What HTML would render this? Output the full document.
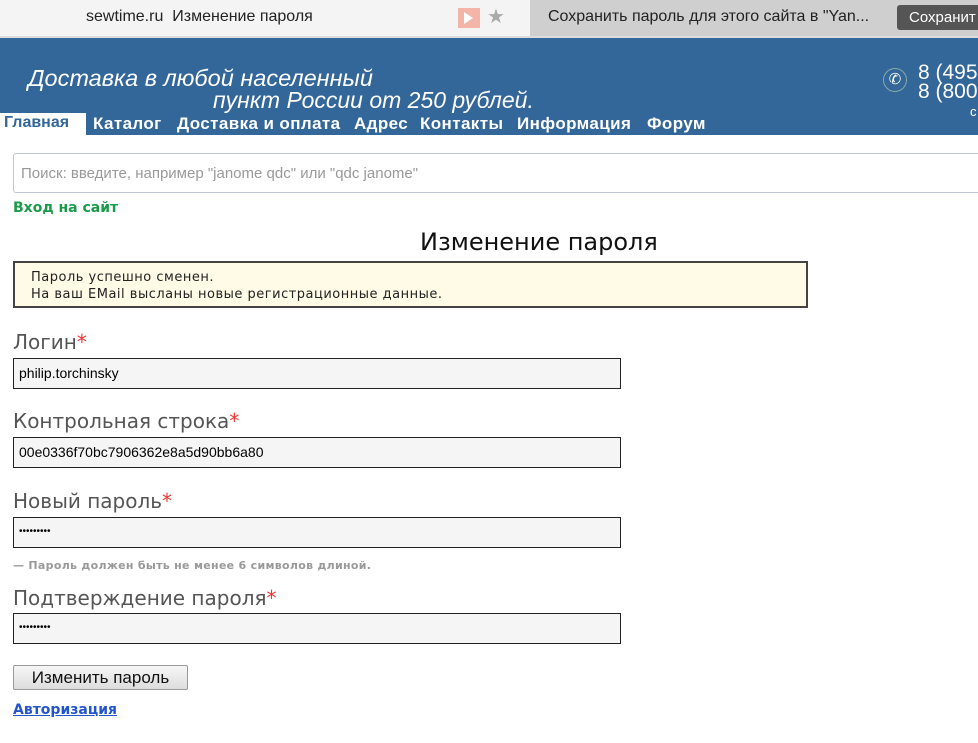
<!DOCTYPE html>
<html><head><meta charset="utf-8"><style>
body{margin:0;width:978px;height:743px;overflow:hidden;background:#fff;font-family:"Liberation Sans","DejaVu Sans",sans-serif;position:relative}
.a{position:absolute;white-space:nowrap}
.lbl{font-family:"DejaVu Sans",sans-serif;font-size:20px;color:#555}
.lbl b{color:#e33;font-weight:normal}
.inp{position:absolute;left:13px;border:1px solid #222;background:#f5f5f5;font-size:14px;line-height:28px;padding-left:5px;box-sizing:border-box;width:608px;height:31px}
.nav{position:absolute;top:114px;font-size:17px;letter-spacing:0.4px;font-weight:bold;color:#fff;white-space:nowrap}
</style></head><body>
<div class="a" style="left:0;top:0;width:978px;height:38px;background:#f4f4f4"></div>
<div class="a" style="left:530px;top:0;width:448px;height:36px;background:#cfcfcf"></div>
<div class="a" style="left:0;top:36px;width:978px;height:2px;background:#ddd"></div>
<div class="a" style="left:86px;top:8px;font-size:16px;color:#222">sewtime.ru&nbsp; Изменение пароля</div>
<div class="a" style="left:458px;top:8px;width:22px;height:20px;background:#f3b5a8"></div>
<div class="a" style="left:464px;top:12px;width:0;height:0;border-left:9px solid #fff;border-top:6px solid transparent;border-bottom:6px solid transparent"></div>
<div class="a" style="left:487px;top:4px;font-size:20px;color:#aaa">★</div>
<div class="a" style="left:548px;top:8px;font-size:16px;color:#222">Сохранить пароль для этого сайта в "Yan...</div>
<div class="a" style="left:897px;top:5px;width:81px;height:25px;background:#555;border-radius:3px 0 0 3px;color:#fff;font-size:15px;line-height:25px;padding-left:12px;box-sizing:border-box">Сохранит</div>
<div class="a" style="left:0;top:38px;width:978px;height:97px;background:#336699"></div>
<div class="a" style="left:28px;top:65px;font-size:23.5px;font-style:italic;color:#fff">Доставка в любой населенный</div>
<div class="a" style="left:213px;top:87px;font-size:23px;font-style:italic;color:#fff">пункт России от 250 рублей.</div>
<div class="a" style="left:883px;top:68px;width:22px;height:22px;border:1px solid #8aa;border-radius:50%;color:#fff;font-size:15px;text-align:center;line-height:22px">✆</div>
<div class="a" style="left:918px;top:63px;font-size:21px;color:#fff;line-height:19px">8 (495<br>8 (800</div>
<div class="a" style="left:970px;top:104px;font-size:13px;color:#fff">с</div>
<div class="a" style="left:0;top:113px;width:86px;height:22px;background:#fff"></div>
<div class="nav" style="left:4px;color:#336699;font-size:16px;letter-spacing:0">Главная</div>
<div class="nav" style="left:93px">Каталог</div>
<div class="nav" style="left:177px">Доставка и оплата</div>
<div class="nav" style="left:354px">Адрес</div>
<div class="nav" style="left:420px">Контакты</div>
<div class="nav" style="left:517px">Информация</div>
<div class="nav" style="left:647px">Форум</div>
<div class="a" style="left:13px;top:153px;width:980px;height:40px;border:1px solid #bcc7d2;border-radius:3px;box-sizing:border-box"></div>
<div class="a" style="left:21px;top:165px;font-size:15px;color:#999">Поиск: введите, например "janome qdc" или "qdc janome"</div>
<div class="a" style="left:13px;top:200px;font-size:14px;font-weight:bold;color:#1a9a4a;font-family:'DejaVu Sans',sans-serif">Вход на сайт</div>
<div class="a" style="left:420px;top:228px;font-size:24px;color:#111;font-family:'DejaVu Sans',sans-serif">Изменение пароля</div>
<div class="a" style="left:13px;top:261px;width:795px;height:47px;border:2px solid #444;background:#fffbe6;box-sizing:border-box;font-family:'DejaVu Sans',sans-serif;font-size:13px;color:#222;padding:6px 0 0 16px;line-height:17px;letter-spacing:0.5px">Пароль успешно сменен.<br>На ваш EMail высланы новые регистрационные данные.</div>
<div class="a lbl" style="left:13px;top:330px">Логин<b>*</b></div>
<div class="inp" style="top:358px">philip.torchinsky</div>
<div class="a lbl" style="left:13px;top:409px">Контрольная строка<b>*</b></div>
<div class="inp" style="top:437px">00e0336f70bc7906362e8a5d90bb6a80</div>
<div class="a lbl" style="left:13px;top:489px">Новый пароль<b>*</b></div>
<div class="inp" style="top:517px;font-size:10px">•••••••••</div>
<div class="a" style="left:13px;top:559px;font-size:11px;font-weight:bold;color:#999;font-family:'DejaVu Sans',sans-serif;letter-spacing:0.3px">— Пароль должен быть не менее 6 символов длиной.</div>
<div class="a lbl" style="left:13px;top:586px">Подтверждение пароля<b>*</b></div>
<div class="inp" style="top:613px;font-size:10px">•••••••••</div>
<div class="a" style="left:13px;top:665px;width:175px;height:25px;border:1px solid #999;border-radius:2px;background:linear-gradient(#f6f6f6,#ddd);box-sizing:border-box;font-size:17px;text-align:center;line-height:23px;color:#111">Изменить пароль</div>
<div class="a" style="left:13px;top:702px;font-size:14px;font-weight:bold;color:#2255cc;text-decoration:underline;font-family:'DejaVu Sans',sans-serif">Авторизация</div>
</body></html>
